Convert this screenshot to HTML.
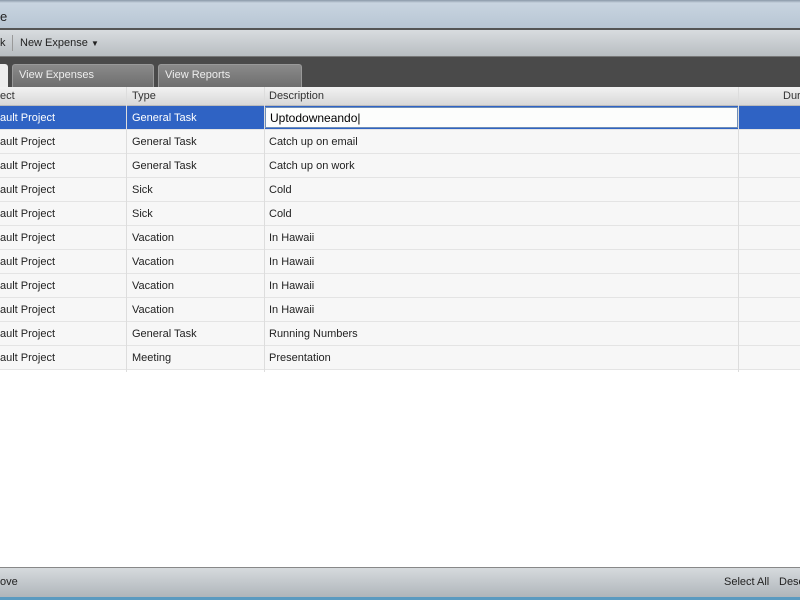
<!DOCTYPE html>
<html><head><style>
*{margin:0;padding:0;box-sizing:border-box}
body{width:800px;height:600px;overflow:hidden;background:#fff;font-family:"Liberation Sans",sans-serif;font-size:11px;color:#222;position:relative}
.abs{position:absolute}
.title{left:0;top:0;width:800px;height:30px;background:linear-gradient(#8a98a8 0,#c8d4e0 3px,#b8c6d4 100%);border-bottom:2px solid #555;}
.tb{left:0;top:30px;width:800px;height:27px;background:linear-gradient(#d8dcdf,#b8bdc1);border-bottom:1px solid #777}
.dark{left:0;top:57px;width:800px;height:30px;background:#4a4a4a}
.tab{top:64px;height:23px;background:linear-gradient(#8a8a8a,#6e6e6e);border:1px solid #999;border-bottom:none;border-radius:3px 3px 0 0;color:#eee;padding:4px 0 0 6px}
.hdr{left:0;top:87px;width:800px;height:19px;background:linear-gradient(#f2f2f2,#d8d8d8);border-bottom:1px solid #bbb}
.h{top:90px;color:#333}
.row{left:0;width:800px;height:24px;border-bottom:1px solid #e4e4e4;background:#f7f7f7}
.c{position:absolute;top:6px}
.vl{top:87px;width:1px;height:285px;background:#ddd}
.bot{left:0;top:567px;width:800px;height:31px;background:linear-gradient(#d6dadd,#aeb4b9);border-top:1px solid #888}
</style></head><body>
<div class="abs title"><span class="abs" style="left:0;top:9px;font-size:13px;color:#222">e</span></div>
<div class="abs tb"><span class="abs" style="left:0;top:7px">k</span><div class="abs" style="left:12px;top:5px;width:1px;height:16px;background:#999"></div><span class="abs" style="left:20px;top:7px">New Expense <span style="font-size:8px">▼</span></span></div>
<div class="abs dark"></div>
<div class="abs" style="left:0;top:64px;width:8px;height:23px;background:#eee;border-radius:0 3px 0 0"></div>
<div class="abs tab" style="left:12px;width:142px">View Expenses</div>
<div class="abs tab" style="left:158px;width:144px">View Reports</div>
<div class="abs hdr"></div>
<span class="abs h" style="left:0">ect</span>
<span class="abs h" style="left:132px">Type</span>
<span class="abs h" style="left:269px">Description</span>
<span class="abs h" style="left:783px">Dur</span>
<div class="abs row" style="top:106px;background:#2f63c4;color:#fff"><span class="c" style="left:0">ault Project</span><span class="c" style="left:132px">General Task</span></div>
<div class="abs" style="left:265px;top:107px;width:473px;height:21px;background:#fcfdfc;border:1px solid #6f8fb8;font-size:12px;padding:3px 4px;color:#000">Uptodowneando|</div>
<div class="abs row" style="top:130px"><span class="c" style="left:0">ault Project</span><span class="c" style="left:132px">General Task</span><span class="c" style="left:269px">Catch up on email</span></div>
<div class="abs row" style="top:154px"><span class="c" style="left:0">ault Project</span><span class="c" style="left:132px">General Task</span><span class="c" style="left:269px">Catch up on work</span></div>
<div class="abs row" style="top:178px"><span class="c" style="left:0">ault Project</span><span class="c" style="left:132px">Sick</span><span class="c" style="left:269px">Cold</span></div>
<div class="abs row" style="top:202px"><span class="c" style="left:0">ault Project</span><span class="c" style="left:132px">Sick</span><span class="c" style="left:269px">Cold</span></div>
<div class="abs row" style="top:226px"><span class="c" style="left:0">ault Project</span><span class="c" style="left:132px">Vacation</span><span class="c" style="left:269px">In Hawaii</span></div>
<div class="abs row" style="top:250px"><span class="c" style="left:0">ault Project</span><span class="c" style="left:132px">Vacation</span><span class="c" style="left:269px">In Hawaii</span></div>
<div class="abs row" style="top:274px"><span class="c" style="left:0">ault Project</span><span class="c" style="left:132px">Vacation</span><span class="c" style="left:269px">In Hawaii</span></div>
<div class="abs row" style="top:298px"><span class="c" style="left:0">ault Project</span><span class="c" style="left:132px">Vacation</span><span class="c" style="left:269px">In Hawaii</span></div>
<div class="abs row" style="top:322px"><span class="c" style="left:0">ault Project</span><span class="c" style="left:132px">General Task</span><span class="c" style="left:269px">Running Numbers</span></div>
<div class="abs row" style="top:346px"><span class="c" style="left:0">ault Project</span><span class="c" style="left:132px">Meeting</span><span class="c" style="left:269px">Presentation</span></div>
<div class="abs vl" style="left:126px"></div>
<div class="abs vl" style="left:264px"></div>
<div class="abs vl" style="left:738px"></div>
<div class="abs bot"><span class="abs" style="left:0;top:8px">ove</span><span class="abs" style="left:724px;top:8px">Select All</span><span class="abs" style="left:779px;top:8px">Dese</span></div>
<div class="abs" style="left:0;top:597px;width:800px;height:3px;background:#5a9ac0"></div>
</body></html>
